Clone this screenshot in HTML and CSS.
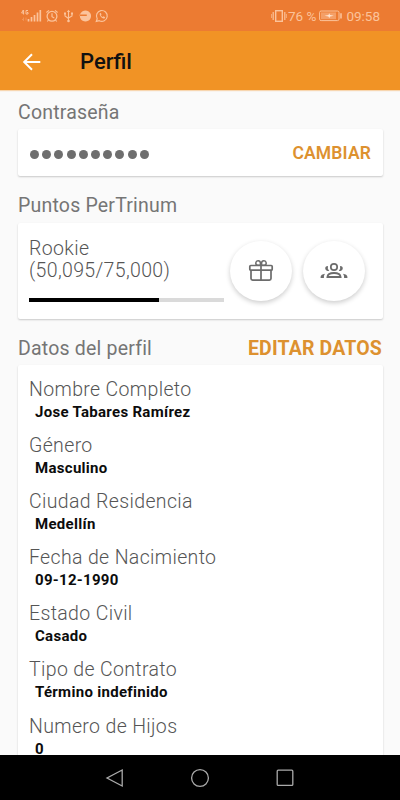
FILE: index.html
```html
<!DOCTYPE html>
<html lang="es">
<head>
    <meta charset="UTF-8">
    <meta name="viewport" content="width=device-width, initial-scale=1.0">
    <title>Perfil</title>
    <link rel="stylesheet" href="styles.css">
</head>
<body>
    <div class="status-bar">
        <svg class="status-icons" width="88" height="16" viewBox="0 0 88 16" fill="none" stroke="currentColor">
            <!-- signal -->
            <path d="M2.2 2 L0.6 5 H3 M2.6 2 V6.5 M7 2.5 H5 V6 H7 V4.5 H6" stroke-width="1"/>
            <path d="M2.5 9.5 V12.5 M1 11 L2.5 12.5 M5 9.5 V12.5" stroke-width=".7" opacity=".5"/>
            <path d="M7.5 11 V13.5 M10.5 9 V13.5 M13.5 7 V13.5 M16.5 4.5 V13.5 M19.3 2 V13.5" stroke-width="1.7"/>
            <!-- alarm -->
            <circle cx="31" cy="8.3" r="4.9" stroke-width="1.3"/>
            <path d="M31 5.3 V8.7 L33.3 10 M25.4 4.5 L28 2.4 M34 2.4 L36.6 4.5 M27.5 12 L26.3 13.5 M34.5 12 L35.7 13.5" stroke-width="1.2"/>
            <!-- usb -->
            <path d="M47.5 3 V13 M44 5.5 V8 L47.5 10.5 M51 5.5 V8 L47.5 10" stroke-width="1.1"/>
            <path d="M45.8 4 L47.5 1.8 L49.2 4 Z M43 4.5 H45 V6.5 H43 Z M50 4.5 H52 V6.5 H50 Z" fill="currentColor" stroke="none"/>
            <circle cx="47.5" cy="13" r="1.3" fill="currentColor" stroke="none"/>
            <!-- app notification -->
            <path fill="currentColor" stroke="none" fill-rule="evenodd" d="M64.5 2.4 A5.6 5.6 0 1 1 64.4 2.4 Z M58.6 6.6 V8 H65.8 V6.6 Z"/>
            <!-- whatsapp -->
            <path d="M75.3 13.4 L76.2 10.7 A5.4 5.4 0 1 1 78.3 12.7 Z" stroke-width="1.2"/>
            <path d="M78.8 5.2 C78 7.4 81.2 11 83.5 10.5 L84.2 9.3 L82.5 8.3 L81.7 9 Q80.3 8.4 79.9 7.2 L80.5 6.5 L79.9 5 Z" fill="currentColor" stroke="none"/>
        </svg>
        <div class="status-right">
            <svg width="16" height="14" viewBox="0 0 16 14" fill="none" stroke="currentColor">
                <rect x="4.7" y="1.7" width="6.6" height="10.6" stroke-width="1.4"/>
                <path d="M2.2 3 V11 M13.8 3 V11" stroke-width="1.2"/>
                <path d="M.6 5 V9 M15.4 5 V9" stroke-width=".7"/>
            </svg>
            <span class="percent">76 %</span>
            <svg class="battery" width="24" height="12" viewBox="0 0 24 12" fill="none" stroke="currentColor">
                <rect x=".6" y="1" width="19.4" height="9.6" rx="1.5" stroke-width="1"/>
                <rect x="2" y="2.4" width="15" height="6.8" fill="currentColor" stroke="none" opacity=".5"/>
                <path d="M22 3.2 V8.6" stroke-width="1.6"/>
                <path d="M5.5 5.8 L9.5 5 L10.2 3.3 L11 5 L14.8 5.8 L11 6.6 L10.2 8.3 L9.5 6.6 Z" fill="#ffe6d2" stroke="none"/>
            </svg>
            <span class="clock">09:58</span>
        </div>
    </div>

    <header class="app-bar">
        <svg class="back" width="20" height="18" viewBox="0 0 20 18" fill="none" stroke="#fff" stroke-width="2">
            <path d="M10 1.2 L2.2 9 L10 16.8 M2.2 9 H18.3"/>
        </svg>
        <h1>Perfil</h1>
    </header>

    <main class="content">
        <div class="section-title"><h2>Contraseña</h2></div>
        <section class="card password-card">
            <div class="dots">
                <i></i><i></i><i></i><i></i><i></i><i></i><i></i><i></i><i></i><i></i>
            </div>
            <button class="link-button">CAMBIAR</button>
        </section>

        <div class="section-title"><h2>Puntos PerTrinum</h2></div>
        <section class="card points-card">
            <div class="points">
                <p>Rookie<br>(50,095/75,000)</p>
                <div class="progress"><div class="progress-fill" style="width: 66.8%"></div></div>
            </div>
            <button class="round-button">
                <svg width="26" height="24" viewBox="0 0 26 24" fill="none" stroke="#6c6c6c" stroke-width="1.7">
                    <rect x="1.8" y="6.5" width="22.4" height="4.7" rx="1"/>
                    <path d="M3 11.2 V19.6 Q3 21.2 4.6 21.2 H21.4 Q23 21.2 23 19.6 V11.2 M13 6.5 V21.2"/>
                    <path d="M12.6 6.3 H9.6 A2.3 2.3 0 1 1 12.4 4 V6 M13.4 6.3 H16.4 A2.3 2.3 0 1 0 13.6 4 V6" stroke-width="1.5"/>
                </svg>
            </button>
            <button class="round-button">
                <svg width="28" height="18" viewBox="0 0 28 18" fill="#6c6c6c">
                    <circle cx="14" cy="5" r="3.2" fill="none" stroke="#6c6c6c" stroke-width="1.7"/>
                    <path d="M7.4 15 C7.6 12.2 10.5 11 14 11 S20.4 12.2 20.6 15 Z" fill="none" stroke="#6c6c6c" stroke-width="1.8"/>
                    <path d="M7.9 3.9 A2.5 2.5 0 1 0 9.2 8.4 Q7.2 6.8 7.9 3.9 Z M20.1 3.9 A2.5 2.5 0 1 1 18.8 8.4 Q20.8 6.8 20.1 3.9 Z"/>
                    <path d="M.6 16 V14.8 Q.9 12.4 5 11.8 Q3.9 13.2 3.9 14.8 V16 Z M27.4 16 V14.8 Q27.1 12.4 23 11.8 Q24.1 13.2 24.1 14.8 V16 Z"/>
                </svg>
            </button>
        </section>

        <div class="section-title">
            <h2>Datos del perfil</h2>
            <button class="link-button edit-button">EDITAR DATOS</button>
        </div>
        <section class="card data-card">
            <dl>
                <dt>Nombre Completo</dt>
                <dd>Jose Tabares Ramírez</dd>
                <dt>Género</dt>
                <dd>Masculino</dd>
                <dt>Ciudad Residencia</dt>
                <dd>Medellín</dd>
                <dt>Fecha de Nacimiento</dt>
                <dd>09-12-1990</dd>
                <dt>Estado Civil</dt>
                <dd>Casado</dd>
                <dt>Tipo de Contrato</dt>
                <dd>Término indefinido</dd>
                <dt>Numero de Hijos</dt>
                <dd>0</dd>
            </dl>
        </section>
    </main>

    <nav class="nav-bar">
        <svg width="20" height="20" viewBox="0 0 20 20"><path d="M17.2 2 V18 L2 10 Z"/></svg>
        <svg width="20" height="20" viewBox="0 0 20 20"><circle cx="10" cy="10" r="8.4"/></svg>
        <svg width="20" height="20" viewBox="0 0 20 20"><rect x="2.2" y="2.2" width="15.6" height="15.2" rx="1"/></svg>
    </nav>
</body>
</html>
```
FILE: styles.css
```css
* {
    box-sizing: border-box;
}
body {
    margin: 0;
    height: 800px;
    display: flex;
    flex-direction: column;
    overflow: hidden;
    background-color: #fafafa;
    font-family: Roboto, sans-serif;
    color: #757575;
}
h1, h2, p, dl, dd {
    margin: 0;
}
svg {
    display: block;
    flex: none;
}
button {
    padding: 0;
    border: none;
    background: none;
    font-family: inherit;
    cursor: pointer;
}
.status-bar {
    flex: none;
    height: 31px;
    padding: 1px 20px 0 21px;
    display: flex;
    align-items: center;
    justify-content: space-between;
    background-color: #ec7b32;
    color: #fbc39b;
}
.status-right {
    display: flex;
    align-items: center;
    font-size: 13.5px;
}
.percent {
    margin: 0 3px 0 1px;
}
.clock {
    margin-left: 3px;
}
.app-bar {
    flex: none;
    height: 59px;
    padding: 2px 22px 0;
    display: flex;
    align-items: center;
    gap: 38px;
    background-color: #f19325;
    box-shadow: 0 1px 1px rgba(241, 147, 37, 0.35);
}
.app-bar h1 {
    font-size: 22px;
    font-weight: 500;
    color: #111;
}
.content {
    flex: 1;
    min-height: 0;
    overflow: hidden;
    padding: 10px 17px 0 18px;
}
.section-title {
    height: 24px;
    display: flex;
    align-items: center;
    justify-content: space-between;
}
.section-title h2 {
    font-size: 19.5px;
    font-weight: 400;
    letter-spacing: 0.2px;
}
.card {
    background-color: #fff;
    border-radius: 2px;
    box-shadow: 0 1px 2px rgba(0, 0, 0, 0.2);
}
.password-card {
    height: 47px;
    margin: 5px 0 17px;
    padding: 0 12px;
    display: flex;
    align-items: center;
    justify-content: space-between;
}
.dots {
    display: flex;
    gap: 3.2px;
    padding-top: 3px;
}
.dots i {
    width: 9px;
    height: 9px;
    border-radius: 50%;
    background-color: #6e6e6e;
}
.link-button {
    font-size: 17.5px;
    font-weight: 600;
    letter-spacing: 0.15px;
    color: #dd912f;
}
.edit-button {
    margin-right: 1px;
    font-size: 19.5px;
    font-weight: 700;
}
.points-card {
    height: 96px;
    margin: 6px 0 17px;
    padding: 0 16px 0 11px;
    display: flex;
    align-items: center;
    gap: 11px;
}
.points {
    width: 195px;
    margin: -3px -5px 0 0;
}
.points p {
    font-size: 19.5px;
    line-height: 22px;
    font-weight: 300;
    letter-spacing: 0.35px;
    color: #555;
}
.progress {
    height: 4px;
    margin-top: 16px;
    background-color: #dadada;
}
.progress-fill {
    height: 100%;
    background-color: #000;
}
.round-button {
    flex: none;
    width: 62px;
    height: 60px;
    display: flex;
    align-items: center;
    justify-content: center;
    border-radius: 50%;
    background-color: #fff;
    box-shadow: 0 2px 5px rgba(0, 0, 0, 0.2);
}
.data-card {
    height: 500px;
    margin-top: 5px;
    padding: 13px 11px;
}
dt {
    height: 24px;
    line-height: 24px;
    font-size: 19.5px;
    font-weight: 300;
    letter-spacing: 0.35px;
    color: #555;
}
dd {
    height: 20px;
    margin: 0 0 12.1px 6px;
    line-height: 20px;
    font-size: 15px;
    font-weight: 700;
    letter-spacing: 0.3px;
    color: #0c0c0c;
}
.nav-bar {
    flex: none;
    height: 45px;
    display: flex;
    align-items: center;
    justify-content: center;
    gap: 65px;
    background-color: #000;
}
.nav-bar svg {
    fill: none;
    stroke: #aaa;
    stroke-width: 1.3;
}
```
